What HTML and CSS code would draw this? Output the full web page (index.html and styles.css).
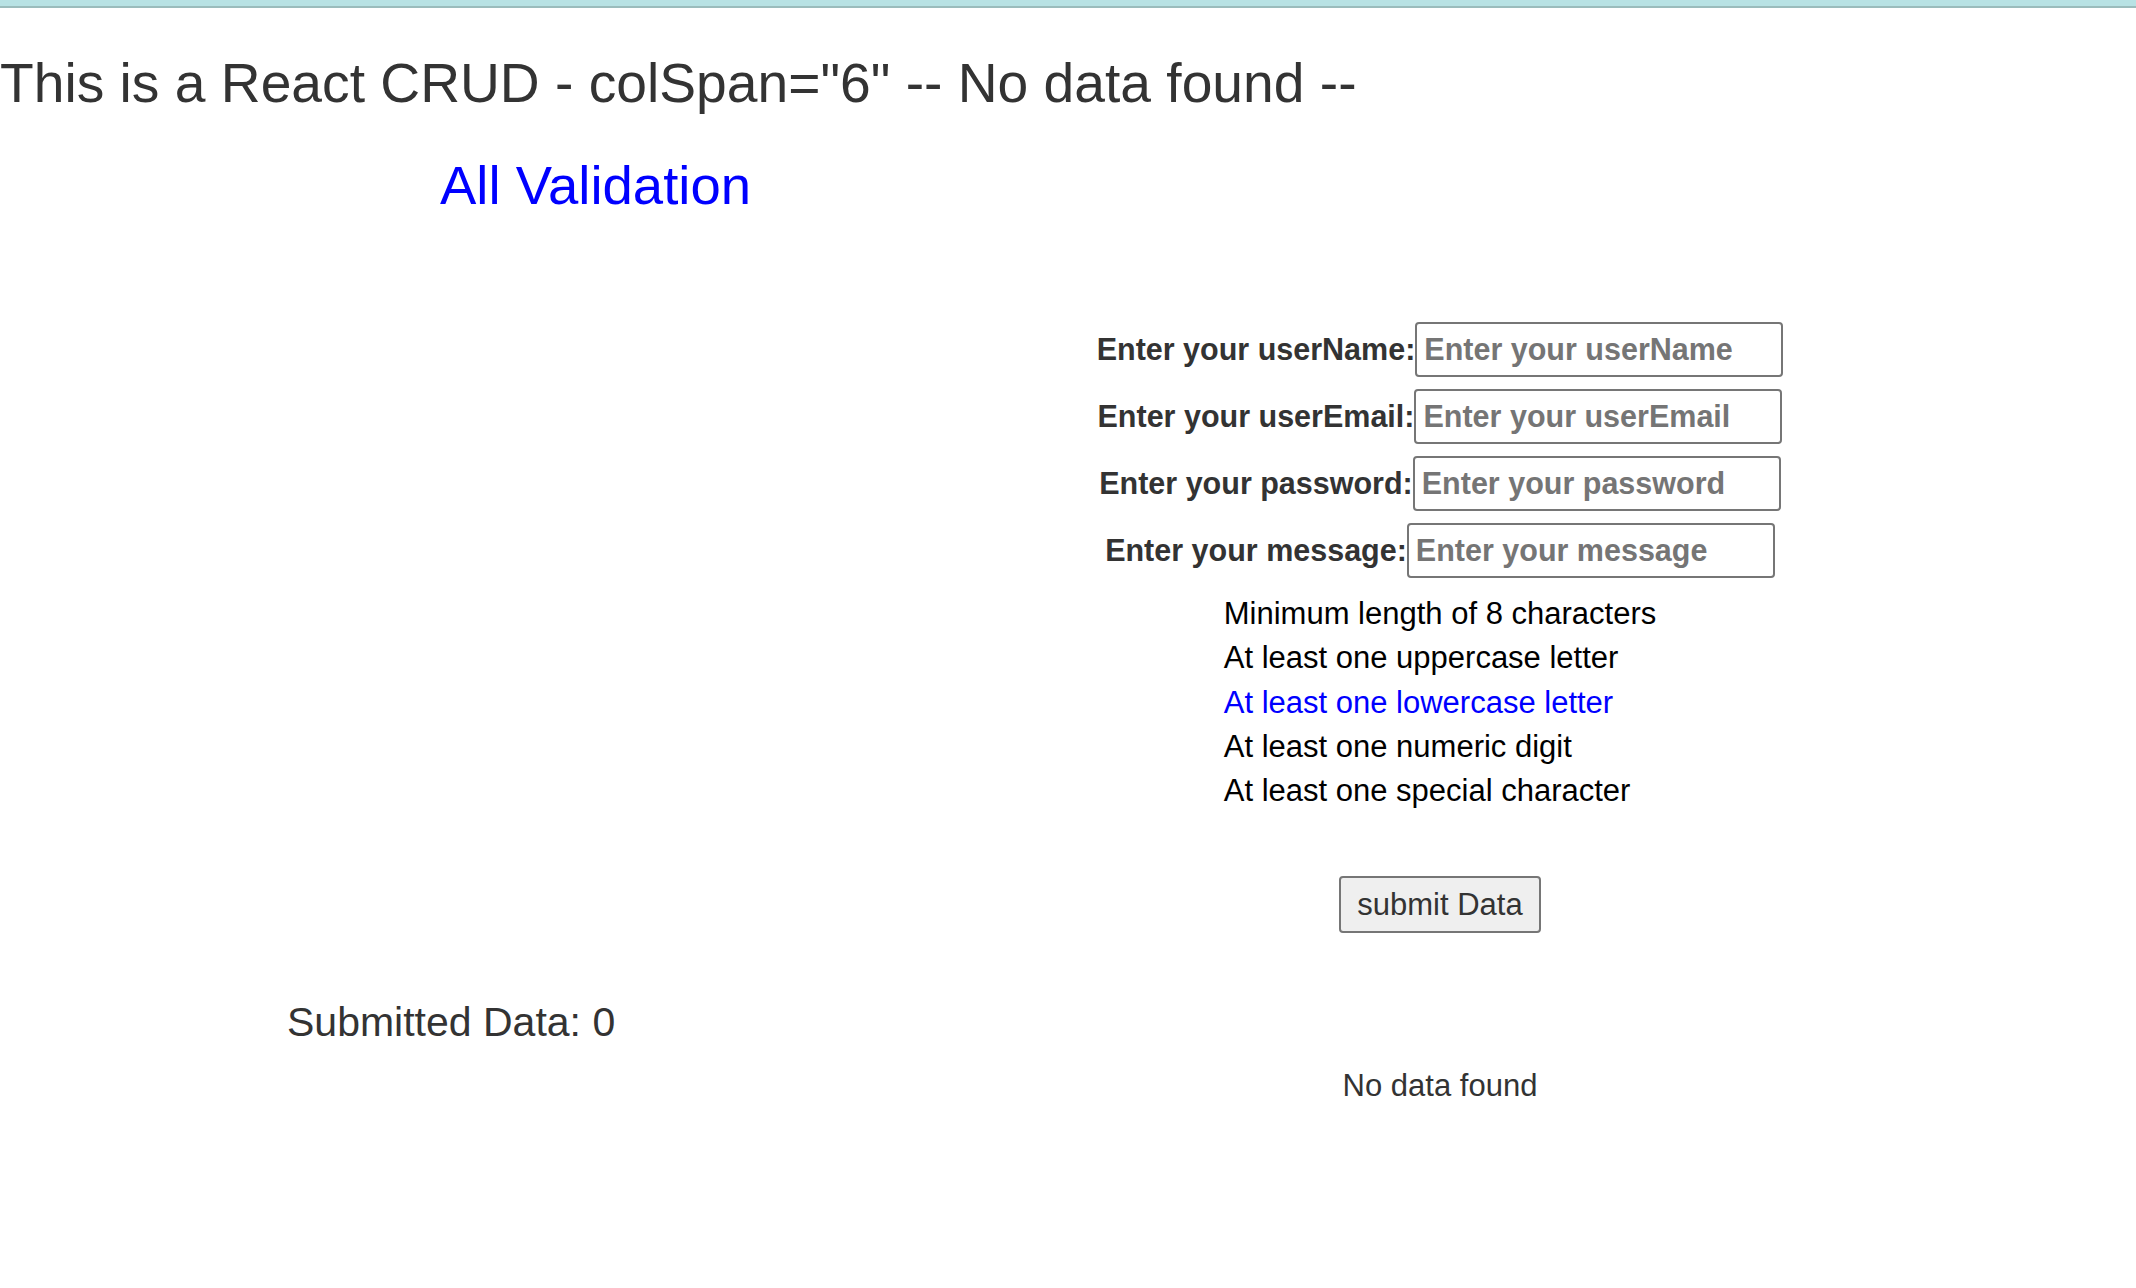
FILE: index.html
```html
<!DOCTYPE html>
<html lang="en">
<head>
<meta charset="utf-8">
<title>React CRUD</title>
<link rel="stylesheet" href="styles.css">
</head>
<body>
<div class="topbar"></div>
<h1 class="page-title">This is a React CRUD - colSpan="6" -- No data found --</h1>
<h2 class="section-title">All Validation</h2>
<div class="layout">
  <div class="left-col"></div>
  <div class="right-col">
    <form class="form">
      <div class="row">
        <label class="label" for="userName">Enter your userName:</label><input class="field" id="userName" type="text" placeholder="Enter your userName">
      </div>
      <div class="row">
        <label class="label" for="userEmail">Enter your userEmail:</label><input class="field" id="userEmail" type="text" placeholder="Enter your userEmail">
      </div>
      <div class="row">
        <label class="label" for="password">Enter your password:</label><input class="field" id="password" type="text" placeholder="Enter your password">
      </div>
      <div class="row">
        <label class="label" for="message">Enter your message:</label><input class="field" id="message" type="text" placeholder="Enter your message">
      </div>
      <div class="rules-wrap">
        <ul class="rules">
          <li>Minimum length of 8 characters</li>
          <li>At least one uppercase letter</li>
          <li class="ok">At least one lowercase letter</li>
          <li>At least one numeric digit</li>
          <li>At least one special character</li>
        </ul>
      </div>
      <div class="actions">
        <button class="btn" type="button">submit Data</button>
      </div>
    </form>
  </div>
</div>
<h3 class="submitted">Submitted Data: 0</h3>
<div class="layout">
  <div class="left-col"></div>
  <div class="right-col">
    <p class="empty">No data found</p>
  </div>
</div>
</body>
</html>
```

FILE: styles.css
```css
html, body {
  margin: 0;
  padding: 0;
  background: #ffffff;
}
body {
  font-family: "Liberation Sans", Arial, Helvetica, sans-serif;
  color: #333333;
}
.topbar {
  height: 6px;
  background: #b8e2e4;
  border-bottom: 2px solid #9bbcbc;
}
.page-title {
  margin: 43px 0 0 0;
  font-size: 55.2px;
  line-height: 64px;
  font-weight: normal;
  color: #333333;
}
.section-title {
  margin: 40px 0 0 440px;
  font-size: 54.5px;
  line-height: 62px;
  font-weight: normal;
  color: #0000ff;
}
.layout {
  display: grid;
  grid-template-columns: 744px 1fr;
}
.right-col {
  text-align: center;
}
.form {
  margin: 105px 0 0 0;
  display: flex;
  flex-direction: column;
  align-items: center;
  gap: 12px;
}
.row {
  display: flex;
  align-items: center;
  justify-content: center;
}
.label {
  font-size: 30.5px;
  font-weight: bold;
  color: #333333;
}
.field {
  box-sizing: border-box;
  width: 368px;
  height: 55px;
  margin: 0;
  padding: 0 7px;
  border: 2px solid #767676;
  border-radius: 4px;
  font-family: "Liberation Sans", Arial, Helvetica, sans-serif;
  font-size: 30.5px;
  font-weight: bold;
  color: #333333;
  background: #ffffff;
}
.field::placeholder {
  color: #757575;
  font-weight: bold;
}
.rules-wrap {
  margin-top: 2px;
}
.rules {
  list-style: none;
  margin: 0;
  padding: 0;
  text-align: left;
  font-size: 31px;
  line-height: 44.3px;
  color: #000000;
}
.rules .ok {
  color: #0000ff;
}
.actions {
  margin-top: 51px;
}
.btn {
  box-sizing: border-box;
  height: 57px;
  padding: 0 16px;
  border: 2px solid #767676;
  border-radius: 4px;
  background: #efefef;
  font-family: "Liberation Sans", Arial, Helvetica, sans-serif;
  font-size: 31px;
  color: #333333;
}
.submitted {
  margin: 65px 0 0 287px;
  font-size: 41px;
  line-height: 48px;
  font-weight: normal;
  color: #333333;
}
.empty {
  margin: 18px 0 0 0;
  font-size: 31px;
  line-height: 44px;
  color: #333333;
}
```
